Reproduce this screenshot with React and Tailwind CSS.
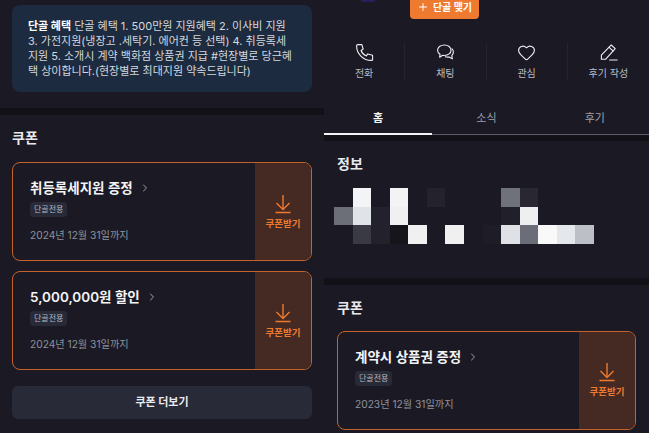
import React from 'react';
import { Plus, ChevronRight, Heart } from 'lucide-react';

const FONT = "font-['Inter','Noto_Sans_CJK_KR',sans-serif]";

const mosaic = [
  [null, '#f3f4f6', null, '#f3f3f5', null, '#24232d', null, null, null, '#6f727b', '#292832', null, null, null],
  ['#6c6e78', '#e0e3e8', '#23222c', '#f0f0f2', null, null, null, null, null, '#211f2a', '#eeeff1', null, null, null],
  [null, '#3a3a44', '#23222c', '#16151c', '#f0f0f0', null, '#f0f0f0', null, '#1e1d27', '#dfe1e6', '#6b6e78', '#f9f9fa', '#e4e7eb', '#bcc0c6'],
];

const PhoneIcon = (props) => (
  <svg viewBox="0 0 24 24" fill="none" stroke="currentColor" strokeWidth="1.4" strokeLinejoin="round" {...props}>
    <path d="M3.5 2h5.2l1.6 5.6-2.6 1.9c1 3.2 3.4 5.6 6.6 6.8l1.9-2.5 6 1.6V21c0 .7-.5 1-1.2 1C10 22 2 13.5 2 3.5 2 2.6 2.6 2 3.5 2z" />
  </svg>
);

const ChatIcon = (props) => (
  <svg viewBox="0 0 24 24" fill="none" stroke="currentColor" strokeWidth="1.4" strokeLinejoin="round" strokeLinecap="round" {...props}>
    <path d="M10.5 2.5c4.8 0 8.5 2.9 8.5 6.6s-3.7 6.6-8.5 6.6c-.8 0-1.5-.1-2.2-.2L4.6 18l.5-3.9C3.200 12.900 2 11.100 2 9.100c0-3.700 3.700-6.600 8.500-6.600z" />
    <path d="M20.300 7.500c1.100 1.100 1.700 2.500 1.700 4 0 1.700-.8 3.200-2 4.300l.6 4.200-4-2.300c-1.700.3-3.300.2-4.800-.4" />
  </svg>
);

const PencilIcon = (props) => (
  <svg viewBox="0 0 24 24" fill="none" stroke="currentColor" strokeWidth="1.4" strokeLinejoin="round" strokeLinecap="round" {...props}>
    <path d="M15.500 2.500l5 4.500L8.500 20.500H3v-5.200z" />
    <path d="M12.800 5.500l5 4.500" />
    <path d="M13.500 21.500H23" />
  </svg>
);

const GetIcon = (props) => (
  <svg viewBox="0 0 18 20" fill="none" stroke="currentColor" strokeWidth="1.4" {...props}>
    <path d="M9 1v14" />
    <path d="M2.500 9L9 15.500 15.500 9" />
    <path d="M1.500 18.500h15" strokeWidth="1.600" />
  </svg>
);

const actions = [
  { label: '전화', icon: PhoneIcon },
  { label: '채팅', icon: ChatIcon },
  { label: '관심', icon: Heart },
  { label: '후기 작성', icon: PencilIcon },
];

const Coupon = ({ title, date }) => (
  <div className="flex h-[99px] rounded-lg border border-[#c4622a] overflow-hidden">
    <div className="flex-1 pl-[17px] pt-[15px]">
      <div className="flex items-center gap-[6px] text-[13.5px] leading-5 font-semibold text-[#f3f4f6]">
        {title}
        <ChevronRight className="h-3 w-3 text-[#a0a2ac]" />
      </div>
      <div className="mt-[4px] w-fit rounded-sm bg-[#282a38] px-1 py-[2px] text-[8px] leading-[11px] text-[#b5b8c2]">단골전용</div>
      <div className="mt-[10px] text-[10.2px] leading-4 text-[#8f919c]">{date}</div>
    </div>
    <div className="flex w-[56px] flex-col items-center justify-center bg-[#452a24] text-[#ee7a2f]">
      <GetIcon className="h-[20px] w-[18px]" />
      <div className="mt-[4px] text-[9.5px] leading-3 font-bold">쿠폰받기</div>
    </div>
  </div>
);

const App = () => (
  <div className={`flex h-[433px] w-[649px] overflow-hidden bg-[#1b1a24] ${FONT}`}>
    {/* left screen */}
    <div className="flex w-[324px] flex-col pt-[5px]">
      <div className="mx-3 h-[87px] rounded-lg bg-[#1c2b3f] pl-[16px] pr-[19px] pt-[14px] text-[11px] leading-[15px] break-all text-[#d5d8de]">
        <b className="font-bold text-white">단골 혜택</b> 단골 혜택 1. 500만원 지원혜택 2. 이사비 지원 3. 가전지원(냉장고 .세탁기. 에어컨 등 선택) 4. 취등록세 지원 5. 소개시 계약 백화점 상품권 지급 #현장별로 당근혜택 상이합니다.(현장별로 최대지원 약속드립니다)
      </div>
      <div className="mt-[16px] h-[7px] bg-[#121118]" />
      <div className="mt-[13px] px-3 text-sm leading-5 font-bold text-[#e8e9ec]">쿠폰</div>
      <div className="mt-[14px] flex flex-col gap-[10px] px-3">
        <Coupon title="취등록세지원 증정" date="2024년 12월 31일까지" />
        <Coupon title="5,000,000원 할인" date="2024년 12월 31일까지" />
      </div>
      <div className="mx-3 mt-4 flex h-[33px] items-center justify-center rounded-md bg-[#282a38] text-[11px] font-bold text-[#e8e9ec]">쿠폰 더보기</div>
    </div>

    {/* right screen */}
    <div className="relative flex w-[325px] flex-col">
      {/* avatar edge, cut off by the crop */}
      <div className="absolute left-[37px] top-0 h-[2px] w-[14px] rounded-b-full bg-[#2a1f5c]" />
      <div className="ml-[86px] flex h-[19px] w-[69px] items-center justify-center gap-1 rounded-b bg-[#ee7a2f] pb-[5px] text-[10px] font-bold text-white">
        <Plus className="h-3 w-3" />
        단골 맺기
      </div>
      <div className="mt-[24px] grid grid-cols-4">
        {actions.map((a, i) => {
          const Icon = a.icon;
          return (
            <div key={a.label} className={`flex flex-col items-center gap-[4px] ${i < 3 ? 'border-r border-[#24232e]' : ''}`}>
              <Icon className="h-[19px] w-[19px] text-[#eceef1]" strokeWidth={1.4} />
              <span className="text-[10px] leading-[14px] text-[#b9bcc5]">{a.label}</span>
            </div>
          );
        })}
      </div>
      <div className="mt-[30px] grid grid-cols-3 border-b border-[#5c5d6b] text-center text-[11px] leading-[16px] text-[#9da0aa]">
        <div className="-mb-px border-b-2 border-[#f3f4f6] pb-[7px] font-bold text-[#f3f4f6]">홈</div>
        <div>소식</div>
        <div>후기</div>
      </div>
      <div className="h-[6px] bg-[#121118]" />
      <div className="mt-[13px] px-[13px] text-sm leading-5 font-bold text-[#e8e9ec]">정보</div>
      <div className="mt-[14px] ml-[10px] grid grid-cols-[repeat(14,18.57px)] auto-rows-[18.67px]">
        {mosaic.flat().map((c, i) => (
          <div key={i} style={{ backgroundColor: c || 'transparent' }} />
        ))}
      </div>
      <div className="mt-[34px] h-[7px] bg-[#121118]" />
      <div className="mt-[13px] px-[13px] text-sm leading-5 font-bold text-[#e8e9ec]">쿠폰</div>
      <div className="mt-[13px] pl-[13px] pr-[13px]">
        <Coupon title="계약시 상품권 증정" date="2023년 12월 31일까지" />
      </div>
    </div>
  </div>
);

export default App;
